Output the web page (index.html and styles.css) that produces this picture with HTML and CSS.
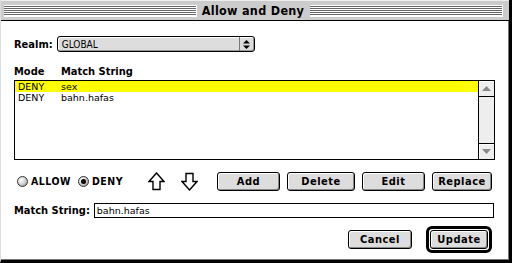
FILE: index.html
```html
<!DOCTYPE html>
<html>
<head>
<meta charset="utf-8">
<link rel="stylesheet" href="styles.css">
</head>
<body>
<div class="window">
  <div class="titlebar">
    <div class="stripes"></div>
    <div class="title">Allow and Deny</div>
    <div class="stripes"></div>
  </div>
  <div class="content">
    <div class="realm-row">
      <span class="label">Realm:</span>
      <div class="popup">
        <span class="popup-text">GLOBAL</span>
        <span class="popup-arrows">
          <svg width="7" height="9" viewBox="0 0 7 9"><path d="M3.5 0 L7 3.5 H0 Z M0 5.5 H7 L3.5 9 Z" fill="#000"/></svg>
        </span>
      </div>
    </div>
    <div class="list-head">
      <span class="col-mode">Mode</span>
      <span class="col-match">Match String</span>
    </div>
    <div class="listbox">
      <div class="rows">
        <div class="row selected"><span class="c-mode">DENY</span><span>sex</span></div>
        <div class="row"><span class="c-mode">DENY</span><span>bahn.hafas</span></div>
      </div>
      <div class="scrollbar">
        <div class="sb-btn up"><svg width="9" height="5" viewBox="0 0 9 5"><path d="M4.5 0 L9 5 H0 Z" fill="#888"/></svg></div>
        <div class="sb-track"></div>
        <div class="sb-btn down"><svg width="9" height="5" viewBox="0 0 9 5"><path d="M0 0 H9 L4.5 5 Z" fill="#888"/></svg></div>
      </div>
    </div>
    <div class="controls">
      <div class="radios">
        <span class="radio"></span><span class="label">ALLOW</span>
        <span class="radio on"></span><span class="label">DENY</span>
      </div>
      <div class="arrows">
        <svg width="17" height="19" viewBox="0 0 17 19"><path d="M8.5 1 L16 9.5 H12 V17.5 H5 V9.5 H1 Z" fill="#fff" stroke="#000" stroke-width="1.4" stroke-linejoin="miter"/></svg>
        <svg width="17" height="19" viewBox="0 0 17 19"><path d="M8.5 18 L16 9.5 H12 V1.5 H5 V9.5 H1 Z" fill="#fff" stroke="#000" stroke-width="1.4" stroke-linejoin="miter"/></svg>
      </div>
      <div class="btns">
        <button class="btn w-add">Add</button>
        <button class="btn w-del">Delete</button>
        <button class="btn w-edit">Edit</button>
        <button class="btn w-rep">Replace</button>
      </div>
    </div>
    <div class="match-row">
      <span class="label">Match String:</span>
      <div class="field">bahn.hafas</div>
    </div>
    <div class="footer">
      <button class="btn w-cancel">Cancel</button>
      <div class="default-ring"><button class="btn w-update">Update</button></div>
    </div>
  </div>
</div>
</body>
</html>
```
FILE: styles.css
```css
html, body {
  margin: 0;
  padding: 0;
  background: #fff;
}
.window {
  width: 512px;
  height: 263px;
  box-sizing: border-box;
  background: #fff;
  border-left: 1px solid #ddd;
  border-right: 3px solid #000;
  border-bottom: 3px solid #000;
  box-shadow: inset -1px -1px 0 #777;
  display: flex;
  flex-direction: column;
  font-family: "DejaVu Sans Condensed", "DejaVu Sans", sans-serif;
}
.titlebar {
  height: 21px;
  box-sizing: border-box;
  background: #ccc;
  border-bottom: 1px solid #000;
  border-top: 1px solid #eee;
  display: flex;
  align-items: center;
  padding: 0 6px 0 3px;
}
.stripes {
  flex: 1;
  height: 12px;
  background: repeating-linear-gradient(to bottom, #fff 0 1px, #666 1px 2px);
  border-right: 1px solid #fff;
  border-bottom: 1px solid #fff;
  box-sizing: border-box;
}
.title {
  font-weight: bold;
  font-size: 12.5px;
  padding: 0 6px 0 5px;
  color: #000;
  letter-spacing: 0.3px;
}
.content {
  flex: 1;
  padding: 15px 14px 0 13px;
  display: flex;
  flex-direction: column;
}
.label {
  font-weight: bold;
  font-size: 11px;
  color: #000;
}
.realm-row {
  display: flex;
  align-items: center;
  gap: 4px;
  height: 16px;
}
.popup {
  width: 198px;
  height: 16px;
  box-sizing: border-box;
  border: 1px solid #000;
  border-radius: 3px;
  background: #ddd;
  box-shadow: inset 1px 1px 0 #fff, inset -1px -1px 0 #999;
  display: flex;
  align-items: center;
  justify-content: space-between;
}
.popup-text {
  font-family: "DejaVu Sans Condensed", sans-serif;
  font-size: 10px;
  padding-left: 4px;
  color: #000;
}
.popup-arrows {
  width: 14px;
  height: 14px;
  border-left: 1px solid #777;
  display: flex;
  align-items: center;
  justify-content: center;
}
.list-head {
  display: flex;
  margin-top: 13px;
  font-weight: bold;
  font-size: 11px;
  height: 14px;
}
.col-mode { width: 47px; }
.listbox {
  margin-top: 1px;
  width: 481px;
  height: 80px;
  box-sizing: border-box;
  border: 1px solid #000;
  display: flex;
}
.rows {
  flex: 1;
  font-family: "DejaVu Sans", sans-serif;
  font-size: 9.5px;
}
.row {
  height: 11px;
  line-height: 11px;
  display: flex;
  padding-left: 3px;
}
.row.selected { background: #ff0; }
.c-mode { width: 43px; }
.scrollbar {
  width: 15px;
  border-left: 1px solid #000;
  display: flex;
  flex-direction: column;
  background: #eee;
}
.sb-btn {
  height: 15px;
  display: flex;
  align-items: center;
  justify-content: center;
  background: #eee;
  box-shadow: inset 1px 1px 0 #fff;
}
.sb-btn.up { border-bottom: 1px solid #000; }
.sb-btn.down { border-top: 1px solid #000; }
.sb-track { flex: 1; background: #eee; }
.controls {
  margin-top: 11px;
  display: flex;
  align-items: center;
  height: 20px;
}
.radios {
  display: flex;
  align-items: center;
  padding-left: 3px;
  font-size: 10px;
}
.radios .label { font-size: 10.5px; letter-spacing: 0.5px; margin-right: 7px; }
.radio {
  width: 11px;
  height: 11px;
  box-sizing: border-box;
  border-radius: 50%;
  border: 1px solid #333;
  background: radial-gradient(circle at 35% 35%, #fff 0, #ddd 40%, #888 100%);
  margin-right: 3px;
  position: relative;
}
.radio.on::after {
  content: "";
  position: absolute;
  left: 2px;
  top: 2px;
  width: 5px;
  height: 5px;
  border-radius: 50%;
  background: #000;
}
.arrows {
  display: flex;
  gap: 16px;
  margin-left: 18px;
  padding-top: 1px;
}
.btns {
  display: flex;
  margin-left: auto;
  gap: 7px;
  padding-right: 3px;
}
.btn {
  height: 19px;
  box-sizing: border-box;
  border: 1px solid #000;
  border-radius: 3px;
  background: #ddd;
  box-shadow: inset 1px 1px 0 #fff, inset -1px -1px 0 #888;
  font-family: "DejaVu Sans Condensed", sans-serif;
  font-weight: bold;
  font-size: 11px;
  color: #000;
  padding: 0;
  letter-spacing: 0.5px;
}
.w-add { width: 63px; }
.w-del { width: 68px; }
.w-edit { width: 63px; }
.w-rep { width: 60px; }
.w-cancel { width: 64px; height: 19px; }
.w-update { width: 58px; height: 19px; }
.match-row {
  margin-top: 12px;
  display: flex;
  align-items: center;
  gap: 4px;
}
.field {
  flex: 1;
  height: 15px;
  box-sizing: border-box;
  border: 1px solid #000;
  font-family: "DejaVu Sans", sans-serif;
  font-size: 9.5px;
  line-height: 13px;
  padding-left: 2px;
  margin-right: 1px;
}
.footer {
  margin-top: 8px;
  display: flex;
  justify-content: flex-end;
  align-items: center;
  gap: 14px;
  padding-right: 3px;
}
.default-ring {
  border: 3px solid #000;
  border-radius: 6px;
  padding: 1px;
  display: flex;
}
```
